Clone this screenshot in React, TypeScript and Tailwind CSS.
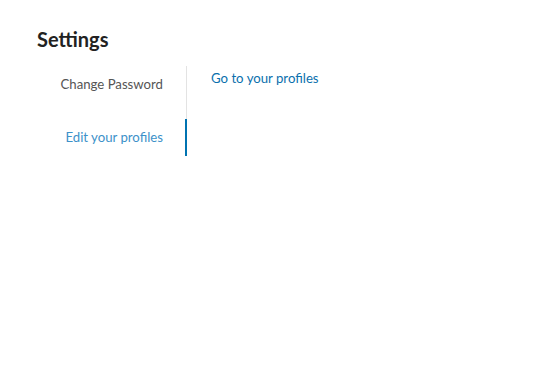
export default function App() {
  return (
    <div className="min-h-[381px] bg-white px-[37px] pt-[25px] font-['Lato',sans-serif]">
      <h1 className="text-[20px] font-bold leading-[28px] text-[#222]">Settings</h1>
      <div className="mt-[13px] flex">
        <nav className="flex w-[150px] flex-col gap-[16px] border-r border-[#e3e3e3]">
          <button
            type="button"
            className="h-[37px] pr-[23px] text-right text-[13.2px] text-[#555]"
          >
            Change Password
          </button>
          <button
            type="button"
            className="-mr-px h-[37px] border-r-2 border-[#0073b1] pr-[22px] text-right text-[13.2px] text-[#3d91c9]"
          >
            Edit your profiles
          </button>
        </nav>
        <div className="-mt-[1px] pl-[24px]">
          <a href="#" className="text-[13.2px] leading-[20px] text-[#0a70ad]">
            Go to your profiles
          </a>
        </div>
      </div>
    </div>
  );
}
